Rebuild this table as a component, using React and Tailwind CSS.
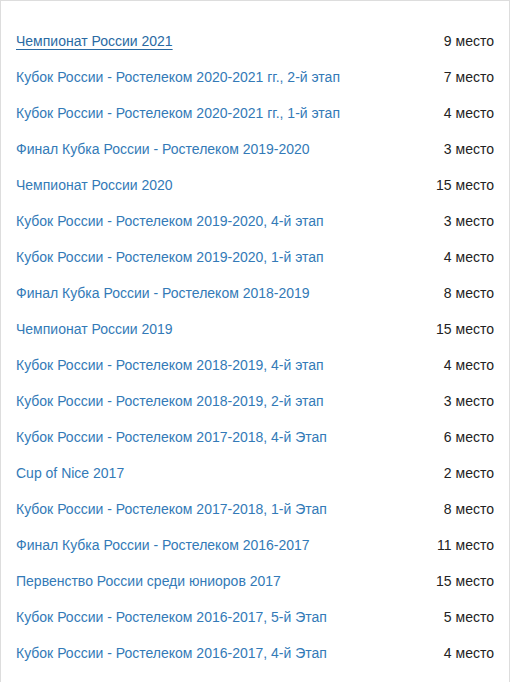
import React from 'react';

const results = [
    { name: 'Чемпионат России 2021', place: 9 },
    { name: 'Кубок России - Ростелеком 2020-2021 гг., 2-й этап', place: 7 },
    { name: 'Кубок России - Ростелеком 2020-2021 гг., 1-й этап', place: 4 },
    { name: 'Финал Кубка России - Ростелеком 2019-2020', place: 3 },
    { name: 'Чемпионат России 2020', place: 15 },
    { name: 'Кубок России - Ростелеком 2019-2020, 4-й этап', place: 3 },
    { name: 'Кубок России - Ростелеком 2019-2020, 1-й этап', place: 4 },
    { name: 'Финал Кубка России - Ростелеком 2018-2019', place: 8 },
    { name: 'Чемпионат России 2019', place: 15 },
    { name: 'Кубок России - Ростелеком 2018-2019, 4-й этап', place: 4 },
    { name: 'Кубок России - Ростелеком 2018-2019, 2-й этап', place: 3 },
    { name: 'Кубок России - Ростелеком 2017-2018, 4-й Этап', place: 6 },
    { name: 'Cup of Nice 2017', place: 2 },
    { name: 'Кубок России - Ростелеком 2017-2018, 1-й Этап', place: 8 },
    { name: 'Финал Кубка России - Ростелеком 2016-2017', place: 11 },
    { name: 'Первенство России среди юниоров 2017', place: 15 },
    { name: 'Кубок России - Ростелеком 2016-2017, 5-й Этап', place: 5 },
    { name: 'Кубок России - Ростелеком 2016-2017, 4-й Этап', place: 4 },
];

function App() {
    return (
        <div
            className="min-h-[682px] bg-white border-t border-x border-[#dddddd] pt-[22px] text-[14px] leading-5"
            style={{ fontFamily: '"Liberation Sans", Arial, sans-serif' }}
        >
            <ul>
                {results.map((item, index) => (
                    <li key={index} className="flex items-center justify-between px-[15px] py-2">
                        <a
                            href="#"
                            className={
                                index === 0
                                    ? 'text-[#2a6aa3] underline underline-offset-[3px]'
                                    : 'text-[#337ab7]'
                            }
                        >
                            {item.name}
                        </a>
                        <span className="text-[#222222]">{item.place} место</span>
                    </li>
                ))}
            </ul>
        </div>
    );
}

export default App;
